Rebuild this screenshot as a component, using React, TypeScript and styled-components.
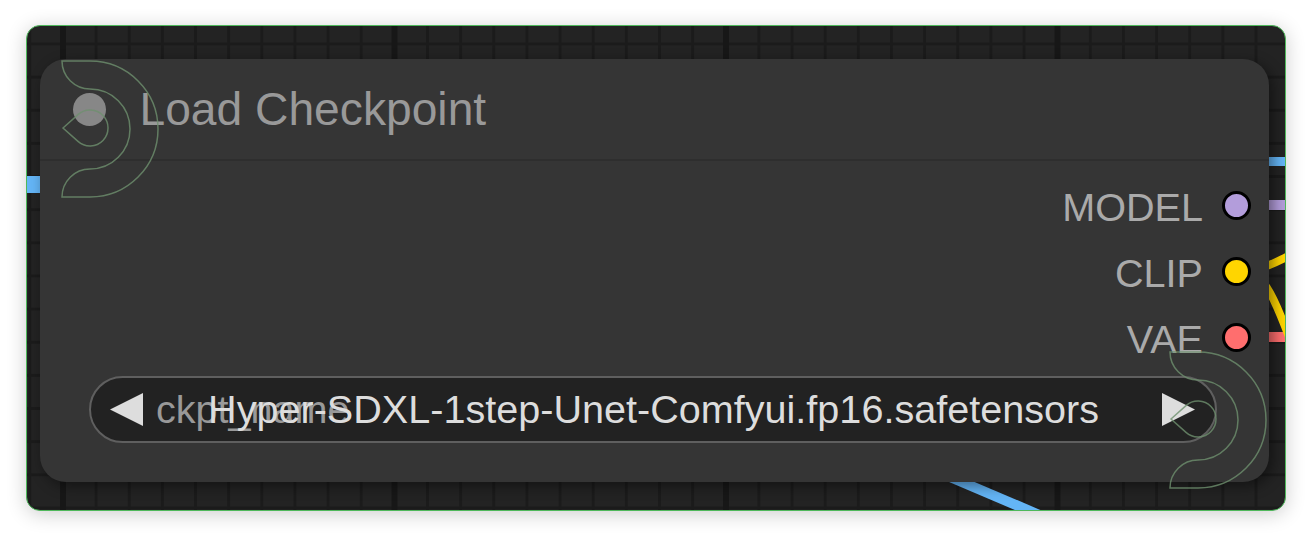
import React from "react";
import styled, { createGlobalStyle } from "styled-components";

const GlobalStyle = createGlobalStyle`
  html, body { margin: 0; padding: 0; background: #ffffff; }
  body { font-family: "Liberation Sans", Arial, sans-serif; }
`;

const Page = styled.div`
  width: 1312px;
  height: 537px;
  box-sizing: border-box;
  padding: 25px 26px 26px 26px;
  background: #ffffff;
`;

const Canvas = styled.div`
  position: relative;
  width: 1260px;
  height: 486px;
  box-sizing: border-box;
  border: 1px solid #4fb85b;
  border-radius: 14px;
  overflow: hidden;
  background-color: #232323;
  background-image:
    linear-gradient(to right, #171717 0 6px, transparent 6px),
    linear-gradient(to right, #1b1b1b 0 3px, transparent 3px),
    linear-gradient(to bottom, #1b1b1b 0 3px, transparent 3px);
  background-size: 331.5px 100%, 33.15px 100%, 100% 33.15px;
  background-position: 33px 0, 1.35px 0, 0 16.5px;
  box-shadow: 0 3px 20px rgba(0, 0, 0, 0.2);
`;

const Wires = styled.svg`
  position: absolute;
  left: 0;
  top: 0;
  width: 1258px;
  height: 484px;
`;

const Node = styled.div`
  position: absolute;
  left: 13px;
  top: 33px;
  width: 1229px;
  height: 423px;
  background: #353535;
  border-radius: 26px;
  box-shadow: 4px 4px 14px rgba(0, 0, 0, 0.45);
  display: flex;
  flex-direction: column;
`;

const TitleBar = styled.div`
  height: 100px;
  border-bottom: 2px solid #2e2e2e;
  display: flex;
  align-items: center;
  padding-left: 32.5px;
  gap: 34px;
`;

const TitleDot = styled.div`
  width: 33px;
  height: 33px;
  border-radius: 50%;
  background: #878787;
`;

const Title = styled.div`
  font-size: 46.2px;
  line-height: 1;
  color: #999999;
  white-space: nowrap;
`;

const Outputs = styled.div`
  display: flex;
  flex-direction: column;
  align-items: flex-end;
  padding: 11px 18px 0 0;
`;

const Slot = styled.div`
  height: 66px;
  display: flex;
  align-items: center;
  gap: 19px;
`;

const SlotLabel = styled.span`
  font-size: 39.6px;
  line-height: 1;
  color: #aaaaaa;
  padding-top: 6px;
`;

const SlotDot = styled.span<{ $color: string }>`
  width: 29px;
  height: 29px;
  box-sizing: border-box;
  border-radius: 50%;
  border: 3px solid #000000;
  background: ${(p) => p.$color};
`;

const Combo = styled.div`
  margin: 6px 52px 0 49px;
  height: 67px;
  box-sizing: border-box;
  border: 2px solid #5f5f5f;
  border-radius: 34px;
  background: #222222;
  display: grid;
  grid-template-columns: 33px 1fr 33px;
  align-items: center;
  padding: 0 20px 0 19px;
`;

const Arrow = styled.svg`
  width: 33px;
  height: 33px;
  display: block;
`;

const ComboText = styled.div`
  display: grid;
  min-width: 0;
  padding: 0 63px 0 13px;
  font-size: 39.6px;
  line-height: 1;
  white-space: nowrap;
`;

const ComboLabel = styled.span`
  grid-area: 1 / 1;
  justify-self: start;
  color: #999999;
`;

const ComboValue = styled.span`
  grid-area: 1 / 1;
  justify-self: end;
  color: #dddddd;
`;

const Badge = styled.svg<{ $left: number; $top: number }>`
  position: absolute;
  left: ${(p) => p.$left}px;
  top: ${(p) => p.$top}px;
  width: 100px;
  height: 140px;
  pointer-events: none;
`;

const BadgeOutline: React.FC<{ left: number; top: number }> = ({ left, top }) => (
  <Badge $left={left} $top={top} viewBox="-2 -2 100 140">
    <g fill="none" stroke="#6e906e" strokeOpacity={0.8} strokeWidth={1.5}>
      <path d="M0,0 H28 A68,68 0 0 1 28,136 H0 A28,28 0 0 1 28,108 A40,40 0 0 0 28,28 A28,28 0 0 1 0,0 Z" />
      <path d="M1,67 L16,53.6 A18,18 0 1 1 16,80.4 Z" />
    </g>
  </Badge>
);

const outputs = [
  { name: "MODEL", color: "#b39ddb" },
  { name: "CLIP", color: "#ffd500" },
  { name: "VAE", color: "#ff6e6e" },
];

export default function App() {
  return (
    <>
      <GlobalStyle />
      <Page>
        <Canvas>
          <Wires viewBox="27 26 1258 484">
            <g fill="none" strokeLinecap="butt">
              <line x1="10" y1="184.5" x2="80" y2="184.5" stroke="#64b5f6" strokeWidth="17" />
              <line x1="1240" y1="161.5" x2="1300" y2="161.5" stroke="#64b5f6" strokeWidth="9" />
              <line x1="1240" y1="205" x2="1300" y2="205" stroke="#b39ddb" strokeWidth="10" />
              <line x1="1240" y1="337" x2="1300" y2="337" stroke="#ff6e6e" strokeWidth="10" />
              <path d="M1240,271 C1258,271 1270,266 1300,250" stroke="#ffd500" strokeWidth="8" />
              <path d="M1240,271 C1262,271 1272,290 1292,345" stroke="#ffd500" strokeWidth="8" />
              <line x1="900" y1="455.6" x2="1090" y2="536.6" stroke="#64b5f6" strokeWidth="10" />
            </g>
          </Wires>
          <Node>
            <TitleBar>
              <TitleDot />
              <Title>Load Checkpoint</Title>
            </TitleBar>
            <Outputs>
              {outputs.map((o) => (
                <Slot key={o.name}>
                  <SlotLabel>{o.name}</SlotLabel>
                  <SlotDot $color={o.color} />
                </Slot>
              ))}
            </Outputs>
            <Combo>
              <Arrow viewBox="0 0 33 33">
                <polygon points="33,0 0,16.5 33,33" fill="#dddddd" />
              </Arrow>
              <ComboText>
                <ComboLabel>ckpt_name</ComboLabel>
                <ComboValue>Hyper-SDXL-1step-Unet-Comfyui.fp16.safetensors</ComboValue>
              </ComboText>
              <Arrow viewBox="0 0 33 33">
                <polygon points="0,0 33,16.5 0,33" fill="#dddddd" />
              </Arrow>
            </Combo>
          </Node>
          <BadgeOutline left={33} top={33} />
          <BadgeOutline left={1141} top={324} />
        </Canvas>
      </Page>
    </>
  );
}
